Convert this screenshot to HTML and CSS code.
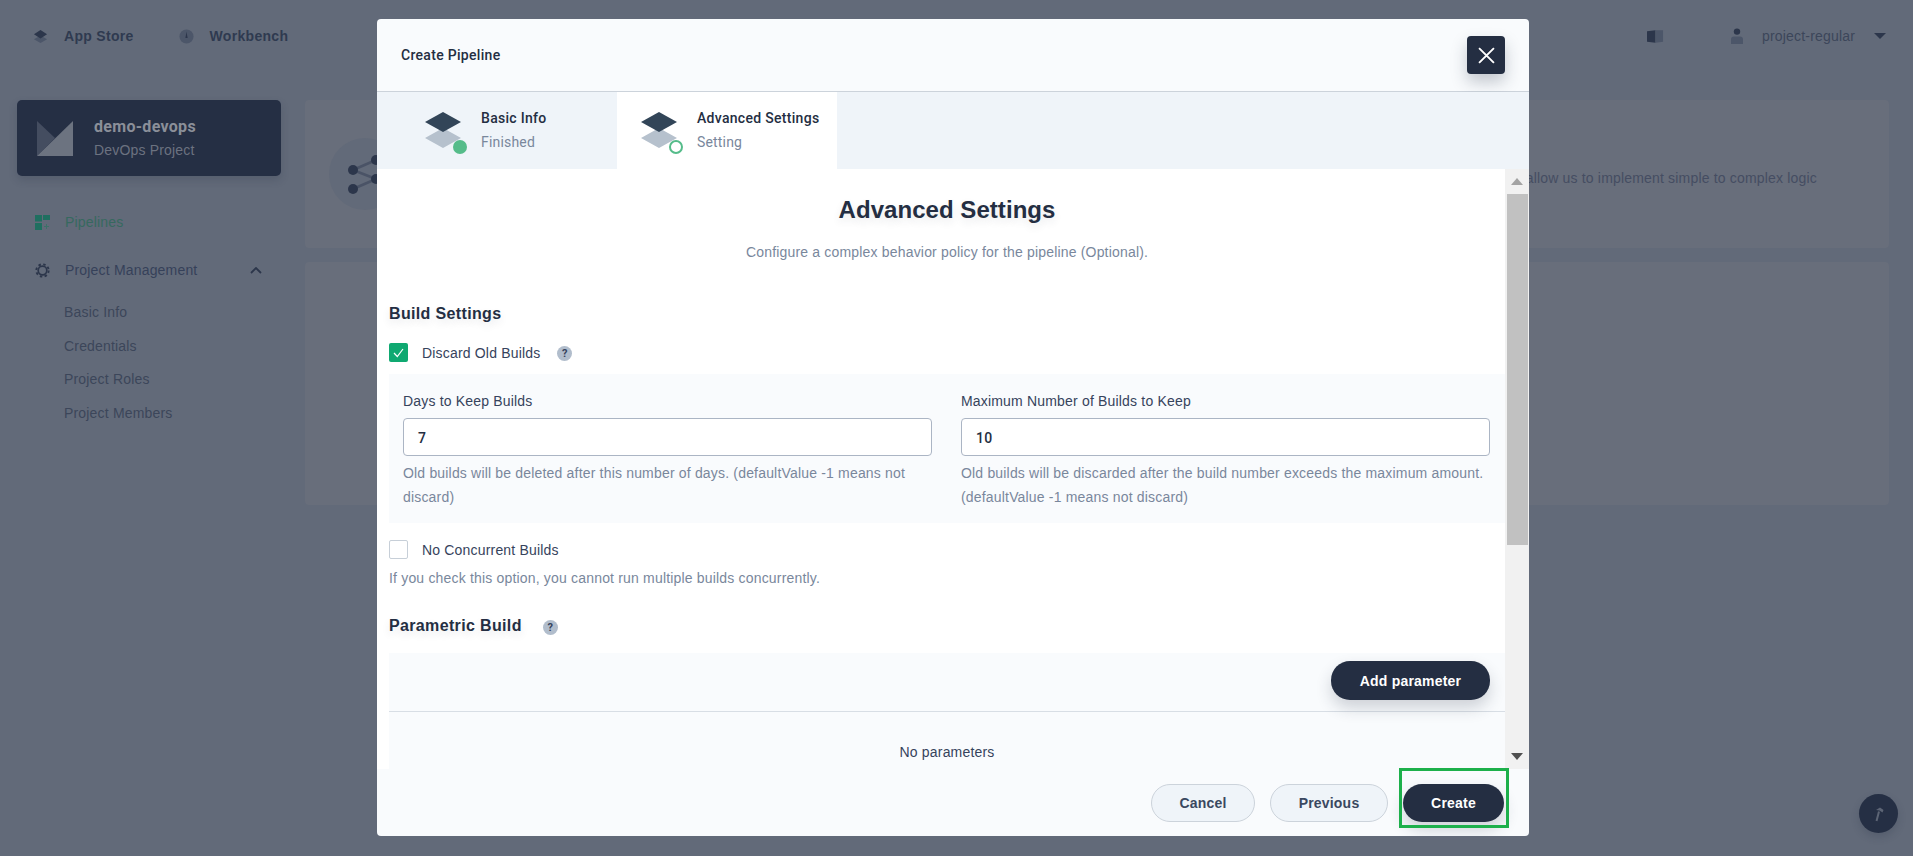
FILE: index.html
```html
<!DOCTYPE html>
<html lang="en">
<head>
<meta charset="utf-8">
<title>Create Pipeline</title>
<link rel="stylesheet" href="styles.css">
</head>
<body>
<div class="page">
  <header class="topbar">
    <nav class="topnav">
      <a class="topnav-item">
        <svg class="top-ic" viewBox="0 0 16 16"><path d="M8 7 15 11 8 15 1 11Z" fill="#4c5669"/><path d="M8 1 15 5.5 8 10 1 5.5Z" fill="#2c364b"/></svg>
        <span>App Store</span>
      </a>
      <a class="topnav-item">
        <svg class="top-ic" viewBox="0 0 16 16"><circle cx="8" cy="8" r="7.5" fill="#4c5669"/><path d="M8 3 9.2 9.5H6.8Z" fill="#2c364b"/></svg>
        <span>Workbench</span>
      </a>
    </nav>
    <div class="userbox">
      <svg class="book-ic" viewBox="0 0 18 13"><path d="M0 1 9 0V13L0 12Z" fill="#2c364b"/><path d="M9 0H17V12L9 13Z" fill="#4c5669"/></svg>
      <svg class="user-ic" viewBox="0 0 12 16"><circle cx="6" cy="3.6" r="3.2" fill="#2c364b"/><path d="M0 16V11.5Q0 8.5 3 8.5H9Q12 8.5 12 11.5V16Z" fill="#4c5669"/></svg>
      <span class="username">project-regular</span>
      <span class="caret"></span>
    </div>
  </header>
  <main class="workspace">
    <aside class="sidebar">
      <div class="project-card">
        <svg class="project-logo" viewBox="0 0 36 35"><path d="M0 0V35L18 17Z" fill="#444d60"/><path d="M0 35 36 0V35Z" fill="#6c7380"/></svg>
        <div>
          <div class="project-name">demo-devops</div>
          <div class="project-type">DevOps Project</div>
        </div>
      </div>
      <ul class="menu">
        <li class="menu-item menu-active">
          <svg class="menu-ic" viewBox="0 0 15 15"><path d="M0 0H7V6.500H0ZM8 0H15V5H8ZM0 8H7V15H0Z" fill="#1f6f60"/><path d="M11.500 9V14M9 11.500H14" stroke="#3d7168" fill="none"/></svg>
          <span>Pipelines</span>
        </li>
        <li class="menu-item">
          <svg class="menu-ic" viewBox="0 0 16 16"><circle cx="8" cy="8" r="4.600" fill="none" stroke="#2c364b" stroke-width="1.800"/><circle cx="8" cy="8" r="6.600" fill="none" stroke="#2c364b" stroke-width="2" stroke-dasharray="2.600 2.580"/></svg>
          <span>Project Management</span>
          <svg class="menu-chevron" viewBox="0 0 12 7"><path d="M1 6 6 1 11 6" fill="none" stroke="#2c364b" stroke-width="1.800"/></svg>
        </li>
      </ul>
      <ul class="submenu">
        <li>Basic Info</li>
        <li>Credentials</li>
        <li>Project Roles</li>
        <li>Project Members</li>
      </ul>
    </aside>
    <section class="content">
      <div class="card card-hero">
        <svg class="hero-ic" viewBox="0 0 72 72"><circle cx="36" cy="36" r="36" fill="#626a79"/><path d="M24 32 47 22M24 32 47 41M24 51 47 41" stroke="#4a5366" stroke-width="2.500"/><circle cx="24" cy="32" r="5" fill="#2c364b"/><circle cx="24" cy="51" r="5" fill="#2c364b"/><circle cx="47" cy="22" r="5" fill="#2c364b"/><circle cx="47" cy="41" r="5" fill="#2c364b"/></svg>
        <p class="hero-text">Pipelines combine a set of plugins, and the stages defined in them allow us to implement simple to complex logic</p>
      </div>
      <div class="card card-list"></div>
    </section>
  </main>
  <button class="tool-btn"><svg viewBox="0 0 16 16" class="tool-ic"><path d="M5.500 15 8 5.500" fill="none" stroke="#5d6575" stroke-width="2"/><path d="M5 4 9 1.500 12.500 4 11.500 6.500 8.500 4.500Z" fill="#5d6575"/></svg></button>
</div>

<div class="modal">
  <div class="modal-head">
    <span class="modal-title">Create Pipeline</span>
    <button class="close-btn"><svg viewBox="0 0 16 16" class="close-ic"><path d="M1 1 15 15M15 1 1 15" stroke="#fff" stroke-width="1.800" fill="none"/></svg></button>
  </div>
  <div class="steps">
    <div class="step step-done">
      <svg class="step-ic" viewBox="0 0 43 42"><path d="M18 16 36 26 18 36 0 26Z" fill="#b6c1cd"/><path d="M18 0 36 10 18 20 0 10Z" fill="#324558"/><circle cx="35" cy="35" r="7" fill="#55bc8a"/></svg>
      <div><div class="step-name">Basic Info</div><div class="step-state">Finished</div></div>
    </div>
    <div class="step step-current">
      <svg class="step-ic" viewBox="0 0 43 42"><path d="M18 16 36 26 18 36 0 26Z" fill="#b6c1cd"/><path d="M18 0 36 10 18 20 0 10Z" fill="#324558"/><circle cx="35" cy="35" r="6" fill="#fff" stroke="#55bc8a" stroke-width="2"/></svg>
      <div><div class="step-name">Advanced Settings</div><div class="step-state">Setting</div></div>
    </div>
  </div>
  <div class="modal-body">
    <div class="scroll-area">
      <h2 class="page-title">Advanced Settings</h2>
      <p class="page-desc">Configure a complex behavior policy for the pipeline (Optional).</p>

      <h3 class="section-title">Build Settings</h3>
      <div class="check-row">
        <span class="checkbox checkbox-on"><svg viewBox="0 0 19 19"><path d="M5 10 8.300 13.500 14 6" fill="none" stroke="#fff" stroke-width="1.200"/></svg></span>
        <span class="check-label">Discard Old Builds</span>
        <span class="help">?</span>
      </div>
      <div class="panel-fields">
        <div class="field">
          <label class="field-label">Days to Keep Builds</label>
          <div class="input">7</div>
          <p class="field-desc">Old builds will be deleted after this number of days. (defaultValue -1 means not discard)</p>
        </div>
        <div class="field">
          <label class="field-label">Maximum Number of Builds to Keep</label>
          <div class="input">10</div>
          <p class="field-desc">Old builds will be discarded after the build number exceeds the maximum amount. (defaultValue -1 means not discard)</p>
        </div>
      </div>
      <div class="check-row check-row-second">
        <span class="checkbox"></span>
        <span class="check-label">No Concurrent Builds</span>
      </div>
      <p class="check-desc">If you check this option, you cannot run multiple builds concurrently.</p>

      <h3 class="section-title section-param">Parametric Build <span class="help help-title">?</span></h3>
      <div class="panel-params">
        <div class="params-bar"><button class="btn btn-dark btn-add">Add parameter</button></div>
        <div class="params-empty">No parameters</div>
      </div>
    </div>
    <div class="scrollbar">
      <span class="arrow arrow-up"></span>
      <span class="thumb"></span>
      <span class="arrow arrow-down"></span>
    </div>
  </div>
  <div class="modal-foot">
    <button class="btn btn-light btn-cancel">Cancel</button>
    <button class="btn btn-light btn-prev">Previous</button>
    <button class="btn btn-dark btn-create">Create</button>
  </div>
</div>
<div class="highlight"></div>
</body>
</html>
```
FILE: styles.css
```css
* { box-sizing: border-box; }
html, body { margin: 0; height: 100%; overflow: hidden; }
body { background: #626a79; font-family: "Liberation Sans", Arial, sans-serif; font-size: 14px; letter-spacing: .18px; color: #3c465a; }
ul { list-style: none; margin: 0; padding: 0; }
p, h2, h3 { margin: 0; }
button { border: 0; font: inherit; padding: 0; }

.page { height: 856px; position: relative; }
.topbar { height: 72px; display: flex; justify-content: space-between; align-items: center; padding: 0 27px 0 33px; }
.topnav { display: flex; gap: 45px; }
.topnav-item { display: flex; align-items: center; gap: 16px; font-weight: 700; font-size: 14px; letter-spacing: .3px; color: #2f3a50; }
.top-ic { width: 15px; height: 15px; }
.userbox { display: flex; align-items: center; }
.book-ic { width: 17px; height: 13px; margin-right: 67px; }
.user-ic { width: 12px; height: 16px; margin-right: 19px; }
.username { color: #3c465a; font-size: 14px; margin-right: 19px; }
.caret { width: 0; height: 0; border: 6px solid transparent; border-top: 6px solid #2c364b; border-bottom: 0; }

.workspace { display: flex; padding: 28px 24px 0 17px; }
.sidebar { width: 264px; margin-right: 24px; flex: none; }
.project-card { height: 76px; background: #252f44; border-radius: 5px; box-shadow: 0 4px 8px rgba(36, 46, 66, .2); display: flex; align-items: center; padding: 1px 0 0 20px; gap: 21px; }
.project-logo { width: 36px; height: 35px; margin-top: -1px; }
.project-name { font-family: Roboto, sans-serif; font-weight: 700; font-size: 16px; letter-spacing: .3px; color: #8b8f99; line-height: 22px; }
.project-type { font-size: 14px; color: #6c7280; line-height: 24px; }
.menu { margin-top: 34px; }
.menu-item { display: flex; align-items: center; height: 24px; margin-bottom: 24px; padding-left: 18px; font-size: 14px; color: #364159; }
.menu-ic { width: 15px; height: 15px; margin-right: 15px; }
.menu-active { color: #36695f; }
.menu-chevron { width: 12px; height: 7px; margin-left: auto; margin-right: 19px; }
.submenu { padding-left: 47px; margin-top: -11px; font-size: 14px; color: #3c465a; }
.submenu li { height: 33.6px; line-height: 34px; }

.content { flex: 1; display: flex; flex-direction: column; gap: 14px; }
.card { background: #686e7b; border-radius: 4px; }
.card-hero { height: 148px; display: flex; align-items: center; padding: 0 72px 0 24px; }
.hero-ic { width: 72px; height: 72px; flex: none; }
.hero-text { margin-left: auto; margin-top: 8px; white-space: nowrap; color: #454d62; font-size: 14px; }
.card-list { height: 243px; }
.tool-btn { position: absolute; right: 15px; bottom: 23px; width: 39px; height: 39px; border-radius: 50%; background: #252f44; box-shadow: 0 4px 8px rgba(36, 46, 66, .2); display: flex; align-items: center; justify-content: center; }
.tool-ic { width: 16px; height: 16px; }

.modal { position: absolute; left: 377px; top: 19px; width: 1152px; height: 817px; background: #f9fbfd; border-radius: 4px; display: flex; flex-direction: column; overflow: hidden; }
.modal-head { height: 73px; border-bottom: 1px solid #ccd3db; display: flex; align-items: center; justify-content: space-between; padding: 0 24px; flex: none; }
.modal-title { font-family: Roboto, sans-serif; font-weight: 500; font-size: 14px; letter-spacing: .3px; color: #242e42; }
.close-btn { width: 38px; height: 38px; border-radius: 4px; background: #242e42; box-shadow: 0 8px 16px rgba(36, 46, 66, .25); display: flex; align-items: center; justify-content: center; }
.close-ic { width: 17px; height: 17px; }

.steps { height: 77px; background: #eff4f9; display: flex; flex: none; }
.step { display: flex; align-items: center; gap: 13px; font-family: Roboto, sans-serif; }
.step-done { width: 240px; padding-left: 48px; }
.step-current { width: 220px; padding-left: 24px; background: #fff; }
.step-ic { width: 43px; height: 42px; margin-top: 4px; }
.step-name { font-weight: 500; font-size: 14px; letter-spacing: .3px; line-height: 24px; color: #242e42; margin-top: -1px; }
.step-state { font-size: 14px; line-height: 24px; color: #79879c; }

.modal-body { height: 600px; display: flex; background: #fff; flex: none; }
.scroll-area { flex: 1; overflow: hidden; padding: 0 0 0 12px; }
.page-title { font-weight: 700; font-size: 24px; letter-spacing: .05px; line-height: 32px; text-align: center; color: #242e42; margin-top: 25px; text-shadow: 0 4px 8px rgba(36, 46, 66, .1); }
.page-desc { text-align: center; line-height: 20px; margin-top: 16px; color: #79879c; font-size: 14px; }
.section-title { font-weight: 700; font-size: 16px; letter-spacing: .35px; line-height: 24px; color: #242e42; margin-top: 40px; text-shadow: 0 4px 8px rgba(36, 46, 66, .1); }
.section-param { margin-top: 24px; display: flex; align-items: center; }
.check-row { display: flex; align-items: center; height: 19px; margin-top: 17px; }
.check-row-second { margin-top: 17px; }
.checkbox { width: 19px; height: 19px; border: 1px solid #c7cfd8; border-radius: 2px; background: #fff; display: block; flex: none; }
.checkbox-on { background: #0fa971; border: 0; }
.check-label { margin-left: 14px; color: #36435c; font-size: 14px; }
.help { width: 15px; height: 15px; border-radius: 50%; background: #b1bdcc; color: #36435c; font: 700 11px/15px Roboto, sans-serif; text-align: center; margin: 2px 0 0 17px; }
.help-title { margin-left: 21px; margin-top: 2px; text-shadow: none; letter-spacing: 0; }
.panel-fields { margin-top: 12px; height: 149px; background: #f9fbfd; padding: 15px 15px 0 14px; display: grid; grid-template-columns: 529px 529px; column-gap: 29px; }
.field-label { display: block; line-height: 24px; font-size: 14px; color: #36435c; }
.input { height: 38px; margin-top: 5px; border: 1px solid #abb5c4; border-radius: 4px; background: #fff; padding: 0 14px; font: 500 14px/38px Roboto, sans-serif; letter-spacing: .3px; color: #242e42; }
.field-desc { margin-top: 5px; line-height: 24px; font-size: 14px; color: #79879c; }
.check-desc { margin-top: 7px; line-height: 24px; color: #79879c; font-size: 14px; }
.panel-params { margin-top: 15px; height: 116px; background: #f9fbfd; }
.params-bar { height: 59px; border-bottom: 1px solid #d8dee5; display: flex; justify-content: flex-end; padding: 8px 15px 0 0; }
.params-empty { text-align: center; line-height: 24px; margin-top: 28px; color: #36435c; font-size: 14px; }

.scrollbar { width: 24px; background: #f1f1f1; flex: none; display: flex; flex-direction: column; align-items: center; padding: 9px 0 9px; }
.arrow { width: 0; height: 0; border-left: 6px solid transparent; border-right: 6px solid transparent; flex: none; }
.arrow-up { border-bottom: 7px solid #a3a3a3; }
.arrow-down { border-top: 7px solid #505050; margin-top: auto; }
.thumb { width: 21px; height: 351px; background: #c1c1c1; margin-top: 9px; }

.modal-foot { flex: 1; display: flex; justify-content: flex-end; gap: 15px; padding: 15px 25px 0 0; }
.btn { height: 38px; border-radius: 19px; font-weight: 700; font-size: 14px; letter-spacing: .2px; text-align: center; }
.btn-dark { background: #242e42; color: #fff; box-shadow: 0 8px 16px rgba(36, 46, 66, .2); }
.btn-light { background: #eff4f9; color: #3a4860; border: 1px solid #ccd3db; }
.btn-add { width: 159px; height: 39px; }
.btn-cancel { width: 104px; }
.btn-prev { width: 118px; }
.btn-create { width: 101px; }

.highlight { position: absolute; left: 1399px; top: 768px; width: 110px; height: 60px; border: 3px solid #1db04b; }
```
